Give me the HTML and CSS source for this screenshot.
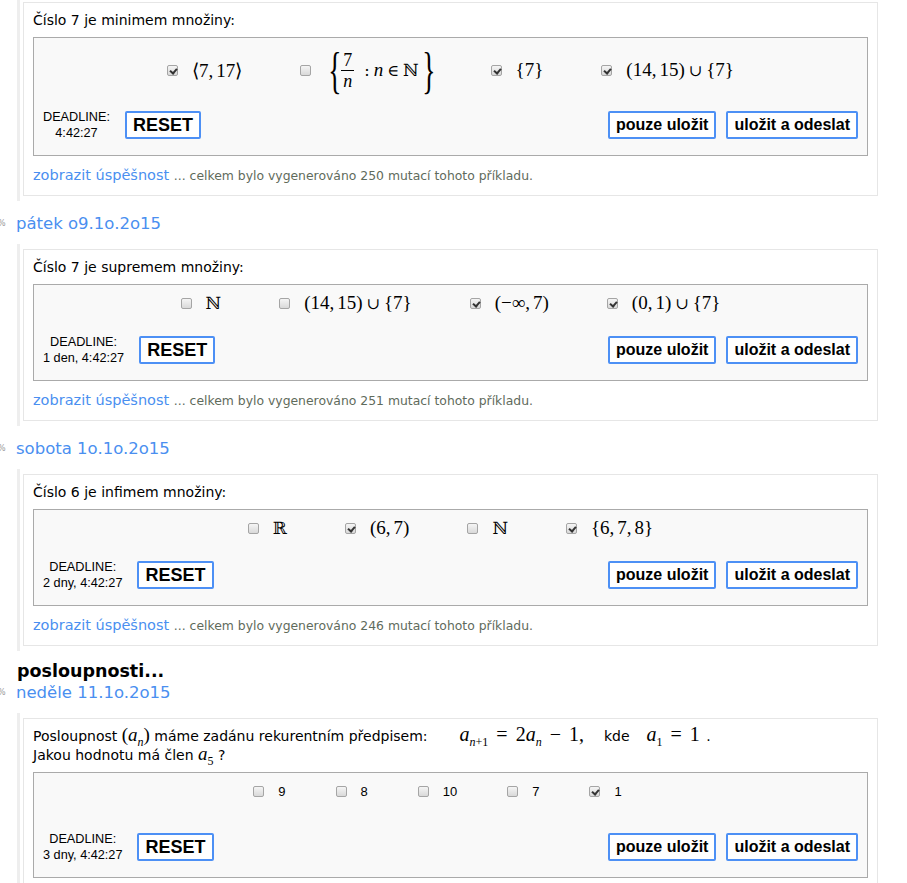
FILE: index.html
```html
<!DOCTYPE html>
<html lang="cs">

<head>
	<meta charset="UTF-8">
	<title>Množiny a posloupnosti</title>
	<meta name="viewport" content="width=device-width, initial-scale=1.0">
	<link rel="stylesheet" href="styles.css">
</head>

<body>

	<!-- úloha: minimum -->
	<div class="den den-prvni">
		<div class="uloha">
			<p class="zadani">Číslo 7 je minimem množiny:</p>
			<div class="panel">
				<div class="moznosti moznosti-vysoke">
					<label class="moznost"><span class="chk on"></span><span class="m">⟨7,<span class="c"></span>17⟩</span></label>
					<label class="moznost"><span class="chk"></span>
						<span class="m mnozina">
							<span class="zavorka">{</span>
							<span class="zlomek"><span class="cit">7</span><span class="jm mi">n</span></span>
							<span class="op">:</span><span class="mi">n</span><span class="op">∈</span><span class="bb">ℕ</span>
							<span class="zavorka">}</span>
						</span>
					</label>
					<label class="moznost"><span class="chk on"></span><span class="m">{7}</span></label>
					<label class="moznost"><span class="chk on"></span><span class="m">(14,<span class="c"></span>15)<span class="op">∪</span>{7}</span></label>
				</div>
				<div class="ovladani">
					<div class="deadline">DEADLINE:<br>4:42:27</div>
					<button class="btn btn-reset">RESET</button>
					<span class="mezera"></span>
					<button class="btn">pouze uložit</button>
					<button class="btn">uložit a odeslat</button>
				</div>
			</div>
			<p class="statistika"><a href="#">zobrazit úspěšnost</a> <span>... celkem bylo vygenerováno 250 mutací tohoto příkladu.</span></p>
		</div>
	</div>

	<h3 class="datum">pátek o9.1o.2o15</h3>

	<!-- úloha: supremum -->
	<div class="den">
		<div class="uloha">
			<p class="zadani">Číslo 7 je supremem množiny:</p>
			<div class="panel">
				<div class="moznosti">
					<label class="moznost"><span class="chk"></span><span class="m"><span class="bb">ℕ</span></span></label>
					<label class="moznost"><span class="chk"></span><span class="m">(14,<span class="c"></span>15)<span class="op">∪</span>{7}</span></label>
					<label class="moznost"><span class="chk on"></span><span class="m">(−∞,<span class="c"></span>7)</span></label>
					<label class="moznost"><span class="chk on"></span><span class="m">(0,<span class="c"></span>1)<span class="op">∪</span>{7}</span></label>
				</div>
				<div class="ovladani">
					<div class="deadline">DEADLINE:<br>1 den, 4:42:27</div>
					<button class="btn btn-reset">RESET</button>
					<span class="mezera"></span>
					<button class="btn">pouze uložit</button>
					<button class="btn">uložit a odeslat</button>
				</div>
			</div>
			<p class="statistika"><a href="#">zobrazit úspěšnost</a> <span>... celkem bylo vygenerováno 251 mutací tohoto příkladu.</span></p>
		</div>
	</div>

	<h3 class="datum">sobota 1o.1o.2o15</h3>

	<!-- úloha: infimum -->
	<div class="den">
		<div class="uloha">
			<p class="zadani">Číslo 6 je infimem množiny:</p>
			<div class="panel">
				<div class="moznosti">
					<label class="moznost"><span class="chk"></span><span class="m"><span class="bb">ℝ</span></span></label>
					<label class="moznost"><span class="chk on"></span><span class="m">(6,<span class="c"></span>7)</span></label>
					<label class="moznost"><span class="chk"></span><span class="m"><span class="bb">ℕ</span></span></label>
					<label class="moznost"><span class="chk on"></span><span class="m">{6,<span class="c"></span>7,<span class="c"></span>8}</span></label>
				</div>
				<div class="ovladani">
					<div class="deadline">DEADLINE:<br>2 dny, 4:42:27</div>
					<button class="btn btn-reset">RESET</button>
					<span class="mezera"></span>
					<button class="btn">pouze uložit</button>
					<button class="btn">uložit a odeslat</button>
				</div>
			</div>
			<p class="statistika"><a href="#">zobrazit úspěšnost</a> <span>... celkem bylo vygenerováno 246 mutací tohoto příkladu.</span></p>
		</div>
	</div>

	<h2 class="tema">posloupnosti...</h2>
	<h3 class="datum datum-tema">neděle 11.1o.2o15</h3>

	<!-- úloha: posloupnost -->
	<div class="den">
		<div class="uloha">
			<p class="zadani zadani-dlouhe">Posloupnost <span class="m mm">(<span class="mi">a</span><sub class="mi">n</sub>)</span> máme zadánu rekurentním předpisem:<span class="m mm rovnice r1"><span class="mi">a</span><sub><i>n</i>+1</sub><span class="op">=</span>2<span class="mi">a</span><sub class="mi">n</sub><span class="op">−</span>1,</span>kde<span class="m mm rovnice r2"><span class="mi">a</span><sub>1</sub><span class="op">=</span>1</span> .<br>Jakou hodnotu má člen <span class="m mm"><span class="mi">a</span><sub>5</sub></span> ?</p>
			<div class="panel">
				<div class="moznosti moznosti-text">
					<label class="moznost"><span class="chk"></span>9</label>
					<label class="moznost"><span class="chk"></span>8</label>
					<label class="moznost"><span class="chk"></span>10</label>
					<label class="moznost"><span class="chk"></span>7</label>
					<label class="moznost"><span class="chk on"></span>1</label>
				</div>
				<div class="ovladani">
					<div class="deadline">DEADLINE:<br>3 dny, 4:42:27</div>
					<button class="btn btn-reset">RESET</button>
					<span class="mezera"></span>
					<button class="btn">pouze uložit</button>
					<button class="btn">uložit a odeslat</button>
				</div>
			</div>
			<p class="statistika"><a href="#">zobrazit úspěšnost</a> <span>... celkem bylo vygenerováno 238 mutací tohoto příkladu.</span></p>
		</div>
	</div>

</body>

</html>
```

FILE: styles.css
```css
/*Reset*/

* {
	margin: 0;
	padding: 0;
	box-sizing: border-box;
}

body {
	font-family: "DejaVu Sans", Verdana, sans-serif;
	font-size: 14px;
	color: #000;
	background: #fff;
	padding-left: 17px;
	width: 878px;
}

a {
	color: #4a8ff0;
	text-decoration: none;
}

/*Nadpisy*/

.tema {
	font-size: 17.5px;
	font-weight: bold;
	line-height: 20px;
	margin-top: 10px;
}

.datum {
	display: flex;
	align-items: center;
	margin-left: -17px;
	padding: 13px 0 10px;
	font-size: 16.5px;
	font-weight: normal;
	line-height: 20px;
	color: #4a8ff0;
}

/*Malá ikonka před datem*/
.datum::before {
	content: "%";
	width: 16px;
	font-size: 8px;
	color: #999;
	margin-left: -2px;
	margin-right: 2px;
}

.datum-tema {
	padding-top: 2px;
}

/*Den = svislá linka vlevo*/

.den {
	border-left: 3px solid #eee;
	padding: 5px 0 5px 3px;
}

.den-prvni {
	padding-top: 2px;
}

.uloha {
	border: 1px solid #e6e6e6;
	padding: 8px 9px 10px;
}

.zadani {
	line-height: 18px;
	margin-bottom: 8px;
}

.zadani-dlouhe {
	line-height: 19px;
	margin-bottom: 7px;
}

/*Šedý panel s možnostmi*/

.panel {
	background: #f9f9f9;
	border: 1px solid #aaa;
	padding: 6px 9px 16px;
}

.moznosti {
	display: flex;
	justify-content: center;
	align-items: center;
	gap: 58px;
	min-height: 24px;
	margin-bottom: 21px;
}

.moznosti-vysoke {
	height: 46px;
	margin-top: 3px;
	margin-bottom: 18px;
}

.moznosti-text {
	gap: 50px;
	margin-bottom: 30px;
	font-family: "Liberation Sans", Arial, sans-serif;
	font-size: 13px;
	padding-right: 26px;
}

.moznost {
	display: inline-flex;
	align-items: center;
	gap: 14px;
}

.chk {
	display: inline-block;
	position: relative;
	width: 11px;
	height: 11px;
	border: 1px solid #a5a5a5;
	border-radius: 2px;
	background: linear-gradient(#f5f5f5, #d9d9d9);
}

.chk.on::after {
	content: "";
	position: absolute;
	left: 3px;
	top: 1px;
	width: 3px;
	height: 5px;
	border: solid #333;
	border-width: 0 2px 2px 0;
	transform: rotate(40deg);
}

/*Matematika*/

.m {
	font-family: "Liberation Serif", "Times New Roman", serif;
	font-size: 19px;
	white-space: nowrap;
}

.mi {
	font-style: italic;
}

.c {
	display: inline-block;
	width: 3px;
}

.op {
	margin: 0 4px;
	font-family: "DejaVu Serif", serif;
	font-size: 16px;
}

.bb {
	font-family: "DejaVu Serif", serif;
	font-size: 17px;
}

.mnozina {
	display: inline-flex;
	align-items: center;
}

.zavorka {
	display: inline-block;
	width: 14px;
	font-size: 50px;
	line-height: 46px;
	text-align: center;
	transform: scaleX(0.55);
}

.zlomek {
	display: inline-flex;
	flex-direction: column;
	align-items: center;
	margin: 0 6px 0 2px;
	font-size: 18px;
}

.cit {
	line-height: 20px;
	padding: 0 2px;
	border-bottom: 1px solid #000;
}

.jm {
	line-height: 20px;
}

.mm {
	font-size: 19px;
	line-height: 0;
}

.mm sub {
	font-size: 12px;
	line-height: 0;
}

.rovnice {
	font-size: 20px;
}

.rovnice .op {
	margin: 0 8px;
	font-family: "Liberation Serif", serif;
	font-size: 20px;
}

.r1 {
	margin: 0 20px 0 32px;
}

.r2 {
	margin: 0 2px 0 17px;
}

/*Ovládací řádek*/

.ovladani {
	display: flex;
	align-items: center;
	height: 28px;
	gap: 10px;
}

.deadline {
	font-family: "Liberation Sans", Arial, sans-serif;
	font-size: 12.7px;
	line-height: 16px;
	text-align: center;
	margin-right: 5px;
}

.mezera {
	flex: 1;
}

.btn {
	font-family: "Liberation Sans", Arial, sans-serif;
	font-size: 16px;
	font-weight: bold;
	height: 28px;
	padding: 0 6px;
	background: #fff;
	color: #000;
	border: 2px solid #4d90f5;
	border-radius: 2px;
	cursor: pointer;
}

.btn-reset {
	font-size: 18px;
}

/*Statistika pod úlohou*/

.statistika {
	margin-top: 10px;
	line-height: 18px;
	font-size: 14.5px;
}

.statistika span {
	font-size: 12.4px;
	color: #5f6b5c;
}
```
